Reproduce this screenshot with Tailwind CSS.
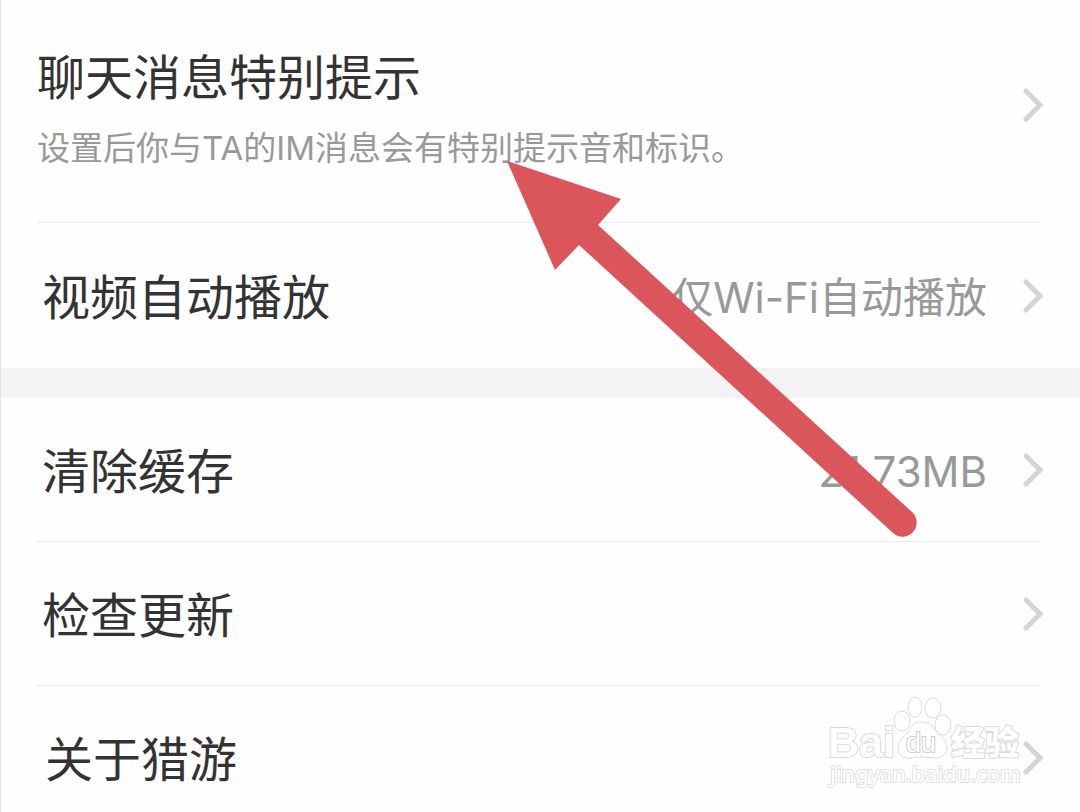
<!DOCTYPE html>
<html lang="zh-CN">
<head>
  <meta charset="UTF-8" />
  <meta name="viewport" content="width=device-width, initial-scale=1.0" />
  <title>设置</title>
  <script src="https://cdn.jsdelivr.net/npm/@tailwindcss/browser@4"></script>
</head>
<body class="relative min-h-screen overflow-x-hidden border-l border-[#e2e2e2] bg-[#fefefe] font-['Inter','Noto_Sans_CJK_SC',sans-serif] text-5xl text-[#333333]">

  <main>
    <!-- Messages and video -->
    <section class="pl-9">
      <a href="#" class="flex h-[222px] items-start justify-between pt-[50px] pr-9">
        <div>
          <h2 class="leading-[56px]">聊天消息特别提示</h2>
          <p class="mt-[26px] text-[33px] leading-8 text-[#999999]">设置后你与TA的IM消息会有特别提示音和标识。</p>
        </div>
        <svg class="mt-[38px] h-[34px] w-[21px] shrink-0" viewBox="0 0 21 34" fill="none" stroke="#d4d4d4" stroke-width="5" stroke-linecap="round" aria-hidden="true"><path d="M3 3 17 17 3 31" /></svg>
      </a>
      <hr class="mr-10 border-[#ececec]" />
      <a href="#" class="flex h-[145px] items-center pr-9 pl-[5px]">
        <span class="pt-1">视频自动播放</span>
        <span class="mr-[36px] ml-auto pt-1 text-[42px] text-[#999999]">仅Wi-Fi自动播放</span>
        <svg class="h-[34px] w-[21px] shrink-0" viewBox="0 0 21 34" fill="none" stroke="#d4d4d4" stroke-width="5" stroke-linecap="round" aria-hidden="true"><path d="M3 3 17 17 3 31" /></svg>
      </a>
    </section>

    <div class="h-[30px] bg-[#f3f3f3]"></div>

    <!-- App -->
    <section class="pl-9">
      <a href="#" class="flex h-[143px] items-center pr-9 pl-[5px]">
        <span class="pt-1">清除缓存</span>
        <span class="mr-[36px] ml-auto pt-1 text-[42px] text-[#999999]">21.73MB</span>
        <svg class="h-[34px] w-[21px] shrink-0" viewBox="0 0 21 34" fill="none" stroke="#d4d4d4" stroke-width="5" stroke-linecap="round" aria-hidden="true"><path d="M3 3 17 17 3 31" /></svg>
      </a>
      <hr class="mr-10 border-[#ececec]" />
      <a href="#" class="flex h-[143px] items-center justify-between pr-9 pl-[5px]">
        <span class="pt-1">检查更新</span>
        <svg class="h-[34px] w-[21px] shrink-0" viewBox="0 0 21 34" fill="none" stroke="#d4d4d4" stroke-width="5" stroke-linecap="round" aria-hidden="true"><path d="M3 3 17 17 3 31" /></svg>
      </a>
      <hr class="mr-10 border-[#ececec]" />
      <a href="#" class="flex h-[126px] items-center justify-between pt-[18px] pr-9 pl-2">
        <span class="pt-1">关于猎游</span>
        <svg class="h-[34px] w-[21px] shrink-0" viewBox="0 0 21 34" fill="none" stroke="#d4d4d4" stroke-width="5" stroke-linecap="round" aria-hidden="true"><path d="M3 3 17 17 3 31" /></svg>
      </a>
    </section>
  </main>

  <!-- Watermark -->
  <svg class="pointer-events-none absolute top-[690px] right-[52px] h-[106px] w-[208px]" viewBox="0 0 208 106" fill="#ffffff" stroke="#dadada" stroke-width="1">
    <text x="8" y="67" font-family="Liberation Sans" font-weight="bold" font-size="43" stroke-width="2" paint-order="stroke">Bai</text>
    <ellipse cx="82" cy="31" rx="8" ry="10" />
    <ellipse cx="95" cy="17" rx="7" ry="10" />
    <ellipse cx="113" cy="18" rx="8" ry="10" />
    <ellipse cx="123" cy="35" rx="8" ry="10" />
    <path d="M102 32C95 32 91 36 88 42C84 47 78 50 78 58C78 64 82 68 89 68C94 68 97 67 102 67C107 67 111 68 116 68C123 68 127 63 127 57C127 50 120 46 116 41C112 35 108 32 102 32Z" />
    <text x="86" y="62" font-family="Liberation Sans" font-size="27" stroke="#cccccc" stroke-width="2" paint-order="stroke">du</text>
    <text x="131" y="65" font-family="Noto Sans CJK SC" font-weight="900" font-size="34" stroke-width="2" paint-order="stroke">经验</text>
    <text x="10" y="92" font-family="Noto Sans" font-size="22" stroke="#e0e0e0" stroke-width="2" paint-order="stroke">jingyan.baidu.com</text>
  </svg>

  <!-- Arrow -->
  <svg class="pointer-events-none absolute top-[160px] right-[162px] h-[378px] w-[412px]" viewBox="0 0 412 378" fill="#db565b" aria-hidden="true">
    <path d="M1 1 115 39 92 65 406 352A14 14 0 0 1 387 373L73 85 49 110Z" />
  </svg>
</body>
</html>
